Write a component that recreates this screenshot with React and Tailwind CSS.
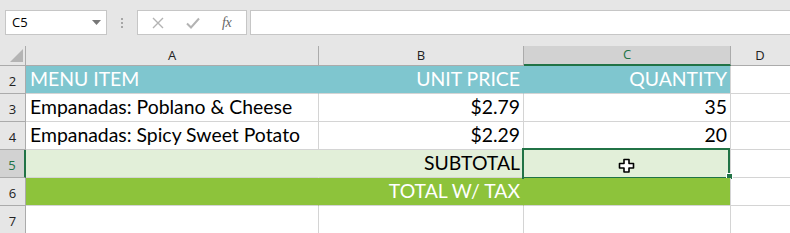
const GRID = 'border-[#d4d4d4]';
const CELL_FONT = { fontFamily: 'Lato, "Open Sans", sans-serif' };

const ROWS = [
  { n: 2, a: 'MENU ITEM', b: 'UNIT PRICE', c: 'QUANTITY', fill: 'teal' },
  { n: 3, a: 'Empanadas: Poblano & Cheese', b: '$2.79', c: '35' },
  { n: 4, a: 'Empanadas: Spicy Sweet Potato', b: '$2.29', c: '20' },
  { n: 5, a: '', b: 'SUBTOTAL', c: '', fill: 'light', selected: true },
  { n: 6, a: '', b: 'TOTAL W/ TAX', c: '', fill: 'green' },
  { n: 7, a: '', b: '', c: '' },
];

const FILLS = {
  teal: 'bg-[#7fc6cf] border-r-[#7fc6cf] text-white',
  light: 'bg-[#e2efd9] border-r-[#e2efd9] text-black',
  green: 'bg-[#8dc33b] border-r-[#8dc33b] text-white',
};

function CrossCursor() {
  return (
    <svg width="17" height="15" viewBox="0 0 17 15" className="absolute left-[94px] top-[8px]">
      <path
        d="M6 1.5h5v4h4.5v4.5H11v4H6v-4H1.5V5.5H6z"
        fill="#fff"
        stroke="#000"
        strokeWidth="1.6"
        strokeLinejoin="round"
      />
    </svg>
  );
}

function Row({ row }) {
  const fill = row.fill ? FILLS[row.fill] : '';
  const lastFill = row.fill === 'light' ? '' : fill;
  return (
    <div className="flex h-[28px]" style={CELL_FONT}>
      <div
        className={`w-[26px] shrink-0 flex items-end justify-center pb-[2px] border-r border-b border-[#ababab] text-[13px] ${
          row.selected ? 'bg-[#d2d2d2] text-[#217346] border-r-2 border-r-[#217346]' : 'bg-[#e6e6e6] text-[#222]'
        }`}
        style={{ fontFamily: '"Open Sans", sans-serif' }}
      >
        {row.n}
      </div>
      <div className={`w-[293px] shrink-0 flex items-end pl-[4px] pb-[2px] border-r border-b ${GRID} text-[19.4px] leading-[24px] ${fill}`}>
        {row.a}
      </div>
      <div className={`w-[205px] shrink-0 flex items-end justify-end pr-[3px] pb-[2px] border-r border-b ${GRID} text-[19.4px] leading-[24px] ${fill}`}>
        {row.b}
      </div>
      <div
        className={`relative w-[207px] shrink-0 flex items-end justify-end pr-[3px] pb-[2px] border-r border-b ${GRID} text-[19.4px] leading-[24px] ${
          row.selected ? 'bg-[#e2efd9]' : lastFill
        } ${row.fill ? 'border-r-[#d4d4d4]' : ''}`}
      >
        {row.c}
        {row.selected && (
          <>
            <div className="absolute -left-[2px] -top-[2px] w-[208px] h-[31px] border-2 border-[#217346] pointer-events-none" />
            <div className="absolute -right-[3px] -bottom-[3px] w-[7px] h-[7px] bg-[#217346] border border-white" />
            <CrossCursor />
          </>
        )}
      </div>
      <div className={`flex-1 border-b ${GRID}`} />
    </div>
  );
}

export default function App() {
  return (
    <div className="w-[790px] h-[233px] overflow-hidden bg-white" style={{ fontFamily: '"Open Sans", sans-serif' }}>
      {/* formula bar */}
      <div className="h-[46px] bg-[#e6e6e6] flex items-start pt-[10px] pl-[5px]">
        <div className="w-[102px] h-[25px] bg-white border border-[#c6c6c6] flex items-center justify-between pl-[6px] pr-[5px] text-[13px] text-black">
          <span>C5</span>
          <svg width="9" height="5" viewBox="0 0 9 5"><path d="M0 0h9L4.5 5z" fill="#777" /></svg>
        </div>
        <div className="w-[30px] h-[25px] flex flex-col items-center justify-center gap-[2px]">
          <span className="w-[2px] h-[2px] bg-[#a6a6a6]" />
          <span className="w-[2px] h-[2px] bg-[#a6a6a6]" />
          <span className="w-[2px] h-[2px] bg-[#a6a6a6]" />
        </div>
        <div className="w-[110px] h-[25px] bg-white border border-[#c6c6c6] flex items-center">
          <svg width="12" height="12" viewBox="0 0 12 12" className="ml-[14px]">
            <path d="M1 1l10 10M11 1L1 11" stroke="#b3b3b3" strokeWidth="1.4" />
          </svg>
          <svg width="14" height="12" viewBox="0 0 14 12" className="ml-[22px]">
            <path d="M1 6.5l4 4L13 1.5" stroke="#b3b3b3" strokeWidth="2" fill="none" />
          </svg>
          <span
            className="ml-[22px] text-[14px] italic text-[#666] tracking-[-0.5px]"
            style={{ fontFamily: '"Liberation Serif", serif' }}
          >
            fx
          </span>
        </div>
        <div className="flex-1 ml-[3px] h-[25px] bg-white border-y border-l border-[#c6c6c6]" />
      </div>

      {/* column headers */}
      <div className="flex h-[20px] bg-[#e6e6e6] text-[13px] text-[#222] border-b border-[#ababab]">
        <div className="w-[26px] shrink-0 border-r border-[#ababab] relative">
          <svg width="13" height="13" viewBox="0 0 13 13" className="absolute left-[10px] top-[3px]">
            <path d="M13 0v13H0z" fill="#b4b4b4" />
          </svg>
        </div>
        <div className="w-[293px] shrink-0 flex items-end justify-center border-r border-[#ababab]">A</div>
        <div className="w-[205px] shrink-0 flex items-end justify-center border-r border-[#ababab]">B</div>
        <div className="w-[207px] shrink-0 flex items-end justify-center bg-[#d2d2d2] text-[#217346] border-r border-[#ababab] border-b-2 border-b-[#217346] -mb-[1px]">
          C
        </div>
        <div className="flex-1 flex items-end justify-center pr-[1px]">D</div>
      </div>

      {ROWS.map((r) => (
        <Row key={r.n} row={r} />
      ))}
    </div>
  );
}
